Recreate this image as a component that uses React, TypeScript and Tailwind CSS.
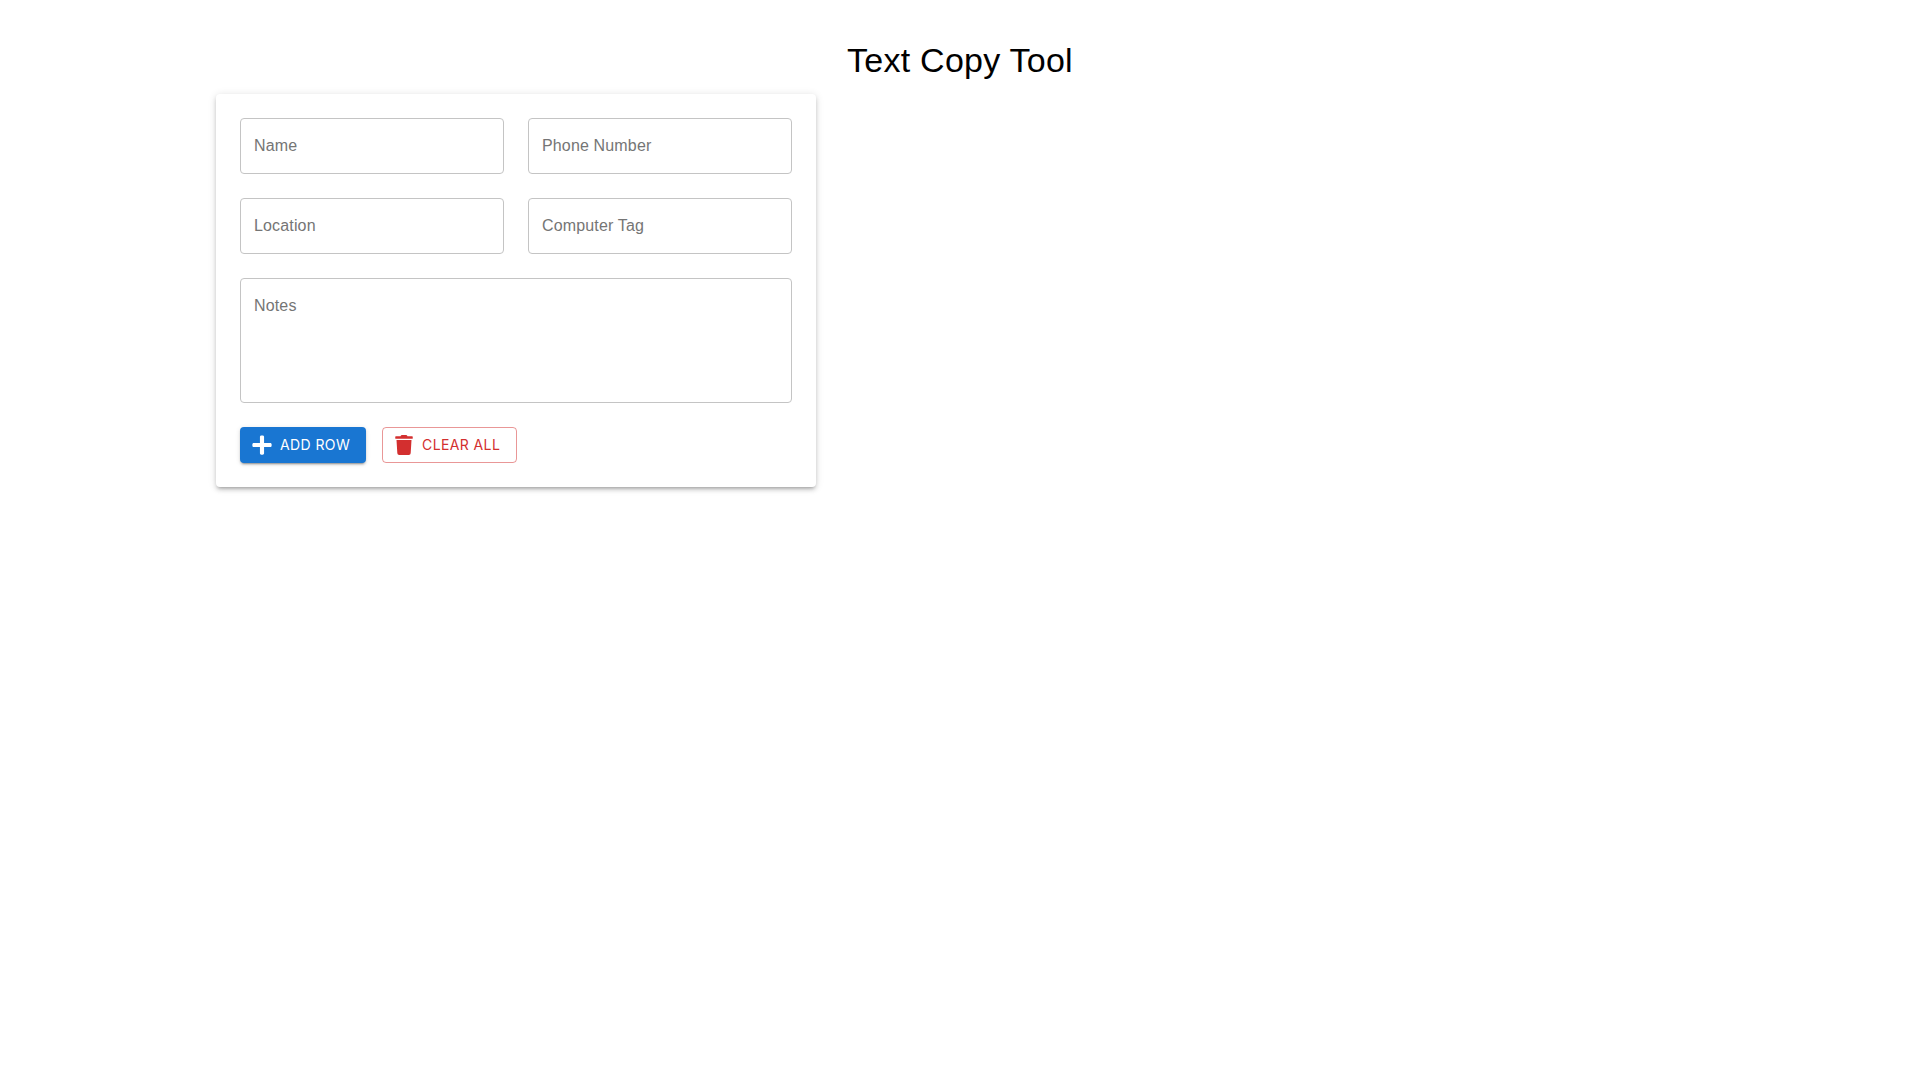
import { FaPlus, FaTrash } from 'react-icons/fa';

export default function App() {
  return (
    <div className="min-h-screen bg-white font-['Liberation_Sans',sans-serif]">
      <h1 className="pt-[40px] pb-[14px] text-center text-[34px] leading-[40px] font-normal tracking-[0.25px] text-black">
        Text Copy Tool
      </h1>
      <div className="ml-[216px] w-[600px] rounded bg-white p-6 shadow-[0_3px_3px_-2px_rgba(0,0,0,0.2),0_3px_4px_0_rgba(0,0,0,0.14),0_1px_8px_0_rgba(0,0,0,0.12)]">
        <div className="grid grid-cols-2 gap-6">
          <input
            placeholder="Name"
            className="h-14 w-full rounded border border-[#c4c4c4] px-[13px] text-base tracking-[0.15px] text-black outline-none placeholder:text-[#757575]"
          />
          <input
            placeholder="Phone Number"
            className="h-14 w-full rounded border border-[#c4c4c4] px-[13px] text-base tracking-[0.15px] text-black outline-none placeholder:text-[#757575]"
          />
          <input
            placeholder="Location"
            className="h-14 w-full rounded border border-[#c4c4c4] px-[13px] text-base tracking-[0.15px] text-black outline-none placeholder:text-[#757575]"
          />
          <input
            placeholder="Computer Tag"
            className="h-14 w-full rounded border border-[#c4c4c4] px-[13px] text-base tracking-[0.15px] text-black outline-none placeholder:text-[#757575]"
          />
          <textarea
            placeholder="Notes"
            className="col-span-2 block h-[125px] w-full resize-none rounded border border-[#c4c4c4] px-[13px] pt-[17px] pb-4 text-base leading-[19px] tracking-[0.15px] text-black outline-none placeholder:text-[#757575]"
          />
        </div>
        <div className="mt-6 flex gap-4 font-['Inter',sans-serif]">
          <button className="flex h-9 w-[126px] items-center gap-[9px] rounded bg-[#1976d2] pl-[13px] text-sm tracking-[0.4px] text-white uppercase shadow-[0_3px_1px_-2px_rgba(0,0,0,0.2),0_2px_2px_0_rgba(0,0,0,0.14),0_1px_5px_0_rgba(0,0,0,0.12)]">
            <FaPlus size={22} className="-mx-[1px] w-[20px]" />
            Add Row
          </button>
          <button className="flex h-9 w-[135px] items-center gap-[9px] rounded border border-[rgba(211,47,47,0.5)] pl-[12px] text-sm tracking-[0.4px] text-[#d32f2f] uppercase">
            <FaTrash size={20} className="w-[18px]" />
            Clear All
          </button>
        </div>
      </div>
    </div>
  );
}
